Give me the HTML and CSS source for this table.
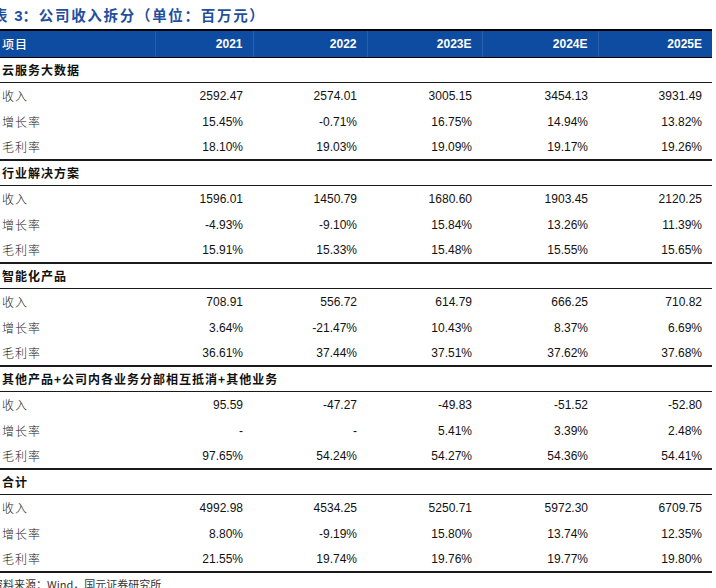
FILE: index.html
```html
<!DOCTYPE html>
<html lang="zh">
<head>
<meta charset="utf-8">
<title>公司收入拆分</title>
<link rel="stylesheet" href="styles.css">
</head>
<body>
<div class="page">
  <div class="title">表 <span class="num">3</span>：公司收入拆分（单位：百万元）</div>
  <table class="tbl">
    <colgroup>
      <col class="c0"><col class="c1"><col class="c2"><col class="c3"><col class="c4"><col class="c5">
    </colgroup>
    <thead>
      <tr><th class="label">项目</th><th>2021</th><th>2022</th><th>2023E</th><th>2024E</th><th>2025E</th></tr>
    </thead>
    <tbody>
      <tr class="sec"><td colspan="6">云服务大数据</td></tr>
      <tr><td class="label">收入</td><td>2592.47</td><td>2574.01</td><td>3005.15</td><td>3454.13</td><td>3931.49</td></tr>
      <tr><td class="label">增长率</td><td>15.45%</td><td>-0.71%</td><td>16.75%</td><td>14.94%</td><td>13.82%</td></tr>
      <tr class="end"><td class="label">毛利率</td><td>18.10%</td><td>19.03%</td><td>19.09%</td><td>19.17%</td><td>19.26%</td></tr>

      <tr class="sec"><td colspan="6">行业解决方案</td></tr>
      <tr><td class="label">收入</td><td>1596.01</td><td>1450.79</td><td>1680.60</td><td>1903.45</td><td>2120.25</td></tr>
      <tr><td class="label">增长率</td><td>-4.93%</td><td>-9.10%</td><td>15.84%</td><td>13.26%</td><td>11.39%</td></tr>
      <tr class="end"><td class="label">毛利率</td><td>15.91%</td><td>15.33%</td><td>15.48%</td><td>15.55%</td><td>15.65%</td></tr>

      <tr class="sec"><td colspan="6">智能化产品</td></tr>
      <tr><td class="label">收入</td><td>708.91</td><td>556.72</td><td>614.79</td><td>666.25</td><td>710.82</td></tr>
      <tr><td class="label">增长率</td><td>3.64%</td><td>-21.47%</td><td>10.43%</td><td>8.37%</td><td>6.69%</td></tr>
      <tr class="end"><td class="label">毛利率</td><td>36.61%</td><td>37.44%</td><td>37.51%</td><td>37.62%</td><td>37.68%</td></tr>

      <tr class="sec"><td colspan="6">其他产品+公司内各业务分部相互抵消+其他业务</td></tr>
      <tr><td class="label">收入</td><td>95.59</td><td>-47.27</td><td>-49.83</td><td>-51.52</td><td>-52.80</td></tr>
      <tr><td class="label">增长率</td><td>-</td><td>-</td><td>5.41%</td><td>3.39%</td><td>2.48%</td></tr>
      <tr class="end"><td class="label">毛利率</td><td>97.65%</td><td>54.24%</td><td>54.27%</td><td>54.36%</td><td>54.41%</td></tr>

      <tr class="sec"><td colspan="6">合计</td></tr>
      <tr><td class="label">收入</td><td>4992.98</td><td>4534.25</td><td>5250.71</td><td>5972.30</td><td>6709.75</td></tr>
      <tr><td class="label">增长率</td><td>8.80%</td><td>-9.19%</td><td>15.80%</td><td>13.74%</td><td>12.35%</td></tr>
      <tr class="end"><td class="label">毛利率</td><td>21.55%</td><td>19.74%</td><td>19.76%</td><td>19.77%</td><td>19.80%</td></tr>
    </tbody>
  </table>
  <div class="source">资料来源：Wind，国元证券研究所</div>
</div>
</body>
</html>
```

FILE: styles.css
```css
html, body {
  margin: 0;
  padding: 0;
  background: #ffffff;
}

.page {
  width: 716px;
  height: 588px;
  overflow: hidden;
  font-family: "Liberation Sans", "Noto Sans CJK SC", sans-serif;
  color: #111111;
}

.title {
  height: 29px;
  line-height: 30px;
  margin-left: -7px;
  font-family: "Noto Sans CJK SC", sans-serif;
  font-size: 14.5px;
  font-weight: 700;
  letter-spacing: 1.7px;
  color: #1f4f9e;
  white-space: nowrap;
}

.title .num {
  font-family: "Liberation Sans", sans-serif;
  font-size: 15px;
  letter-spacing: 0;
}

.tbl {
  width: 712px;
  table-layout: fixed;
  border-collapse: collapse;
  border-spacing: 0;
}

.c0 { width: 155px; }
.c1 { width: 98px; }
.c2 { width: 114px; }
.c3 { width: 115px; }
.c4 { width: 116px; }
.c5 { width: 114px; }

.tbl th {
  height: 25.5px;
  padding: 0 10px 0 0;
  background: #0d4ca0;
  color: #ffffff;
  font-size: 12px;
  font-weight: 700;
  text-align: right;
  border-top: 2px solid #000000;
  border-bottom: 1px solid #000000;
  border-left: 1px solid #2a60ab;
  line-height: 16px;
}

.tbl th:first-child {
  border-left: none;
}

.tbl th.label {
  text-align: left;
  padding-left: 2px;
  font-family: "Noto Sans CJK SC", sans-serif;
  font-weight: 500;
  letter-spacing: 1px;
}

.tbl td {
  height: 25.75px;
  padding: 0 10px 0 0;
  font-size: 12px;
  text-align: right;
  line-height: 16px;
  white-space: nowrap;
}

.tbl td.label {
  text-align: left;
  padding-left: 2px;
  font-family: "Noto Sans CJK SC", sans-serif;
  font-weight: 300;
  letter-spacing: 1px;
  color: #222222;
}

.tbl tr.sec td {
  height: 24.5px;
  text-align: left;
  padding-left: 2px;
  font-family: "Noto Sans CJK SC", sans-serif;
  font-weight: 700;
  letter-spacing: 1px;
  border-bottom: 1px solid #1a1a1a;
}

.tbl tr.end td {
  height: 24px;
  border-bottom: 2px solid #1a1a1a;
}

.source {
  margin-top: 4px;
  margin-left: -8px;
  font-family: "Noto Sans CJK SC", sans-serif;
  font-size: 11px;
  line-height: 14px;
  color: #333333;
  white-space: nowrap;
}
```
